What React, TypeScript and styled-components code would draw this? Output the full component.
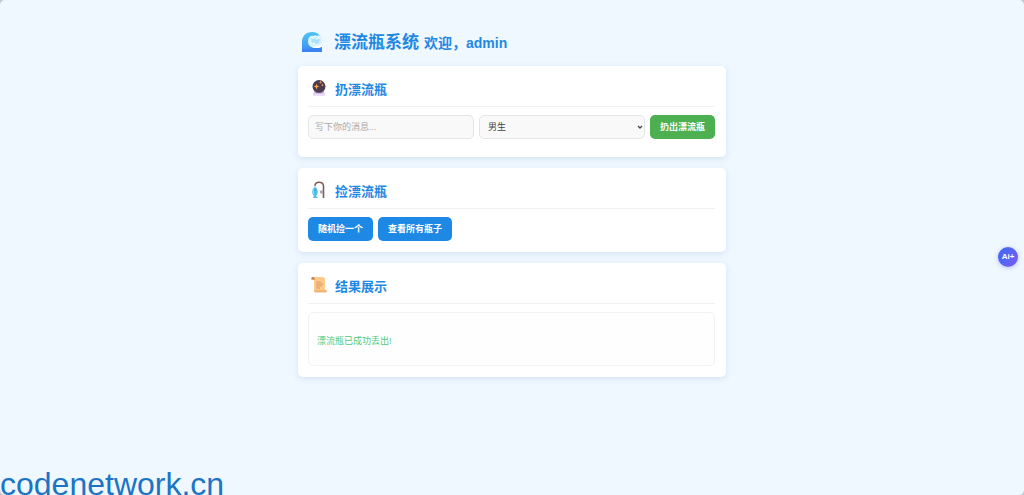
import React from 'react';
import styled, { createGlobalStyle } from 'styled-components';

const GlobalStyle = createGlobalStyle`
  *, *::before, *::after { box-sizing: border-box; }
  body {
    margin: 0;
    background: #c3c9ce;
    font-family: "Liberation Sans", "Noto Sans CJK SC", sans-serif;
    font-size: 9px;
    line-height: 14px;
    color: #333;
  }
  button, input, select { font: inherit; }
`;

const Page = styled.div`
  position: relative;
  min-height: 100vh;
  padding: 30px 16px 48px;
  border-radius: 5px;
  background: #eff7ff;
`;

const Container = styled.main`
  display: flex;
  flex-direction: column;
  gap: 11px;
  width: 100%;
  max-width: 428px;
  margin: 0 auto;
`;

const Header = styled.header`
  display: flex;
  align-items: center;
  gap: 11px;
  height: 25px;
  padding-left: 3px;
  color: #1e88e5;
`;

const Titles = styled.div`
  display: flex;
  align-items: baseline;
  gap: 5px;
`;

const Title = styled.h1`
  margin: 0;
  font-size: 17px;
  line-height: 26px;
`;

const Welcome = styled.span`
  font-size: 14px;
  font-weight: 700;
  line-height: 24px;
`;

const Card = styled.section<{ $bottom?: number }>`
  padding: 11px 11px ${({ $bottom }) => $bottom ?? 11}px 10px;
  border-radius: 5px;
  background: #fff;
  box-shadow: 0 2px 6px rgba(60, 110, 160, 0.13);
`;

const CardHead = styled.div`
  display: flex;
  align-items: flex-start;
  gap: 7px;
  height: 30px;
  padding: 2px 0 0 2px;
  margin-bottom: 8px;
  border-bottom: 1px solid #f0f1f3;
`;

const CardTitle = styled.h2`
  margin: 0;
  color: #1e88e5;
  font-size: 13px;
  line-height: 22px;
`;

const Row = styled.div`
  display: flex;
  align-items: center;
  gap: 5px;
`;

const FormRow = styled.form`
  display: grid;
  grid-template-columns: minmax(0, 1fr) minmax(0, 1fr) auto;
  align-items: center;
  gap: 5px;
`;

const TextInput = styled.input`
  width: 100%;
  height: 24px;
  padding: 0 6px;
  border: 1px solid #e4e5e7;
  border-radius: 5px;
  background: #f9f9f9;
  color: #444;
  &::placeholder { color: #aaa; opacity: 1; }
`;

const SelectWrap = styled.div`
  display: grid;
  align-items: center;
  svg {
    grid-area: 1 / 1;
    justify-self: end;
    margin-right: 2px;
    pointer-events: none;
  }
`;

const Select = styled.select`
  grid-area: 1 / 1;
  width: 100%;
  height: 24px;
  padding: 0 8px;
  border: 1px solid #e4e5e7;
  border-radius: 5px;
  background: #f9f9f9;
  color: #444;
  appearance: none;
`;

const Button = styled.button<{ $color: string }>`
  flex: none;
  height: 24px;
  padding: 0 10px;
  border: 0;
  border-radius: 5px;
  background: ${({ $color }) => $color};
  color: #fff;
  font-weight: 700;
  cursor: pointer;
`;

const Result = styled.div`
  padding: 21px 8px 17px;
  border: 1px solid #f1f2f4;
  border-radius: 5px;
  background: #fefefe;
`;

const Success = styled.p`
  margin: 0;
  color: #4fcb7c;
`;

const AiButton = styled.button`
  position: absolute;
  top: 247px;
  right: 6px;
  width: 20px;
  height: 20px;
  padding: 0;
  border: 0;
  border-radius: 50%;
  background: linear-gradient(120deg, #3b6cf0, #7a5af8);
  box-shadow: 0 1px 4px rgba(80, 90, 220, 0.35);
  color: #fff;
  font-size: 8px;
  font-weight: 700;
  line-height: 20px;
`;

const Watermark = styled.div`
  position: absolute;
  left: 0;
  bottom: 0;
  color: #1c74c4;
  font-size: 32px;
  line-height: 22px;
`;

const Clip = styled.div`
  overflow: hidden;
`;

const WaveIcon = () => (
  <svg width="22" height="22" viewBox="0 0 22 22" aria-hidden="true">
    <defs>
      <linearGradient id="wave" x1="0" y1="0" x2="0" y2="1">
        <stop offset="0" stopColor="#4ec3f5" />
        <stop offset="0.6" stopColor="#43a5f5" />
        <stop offset="1" stopColor="#3c82f4" />
      </linearGradient>
    </defs>
    <path d="M1 20V10C1 4 5 0 11 0c4 0 6 1 8 4h1v4l1 12z" fill="url(#wave)" />
    <path d="M7 9c0-4 3-6 6-5l1-1 2 1 2-1 1 1 2 0-1 2 1 2-1 2 1 1v4c-2 2-5 2-8 1-4-1-6-3-6-7z" fill="#d9f3ff" />
    <path d="M10 6l2 1 2-1 1 2 3-1 2 1-2 1v2l-3 1-2-2-2 1z" fill="#a9e0fb" />
    <path d="M8 9c0 5 5 7 9 5l4-2v3c-7 3-13 0-13-6z" fill="#fff" />
    <path d="M1 17c5 2 8-1 13-1 3 0 5 0 7-1v5H1z" fill="#3b83f3" />
  </svg>
);

const CrystalIcon = () => (
  <svg width="18" height="18" viewBox="0 0 18 18" aria-hidden="true">
    <path d="M4 12h10l1 5H3z" fill="#d3c2e8" />
    <path d="M3 15h12v2H3z" fill="#e9dff5" />
    <circle cx="9" cy="7.500" r="6.500" fill="#4a3b50" />
    <path d="M4 11.500c2 2 8 2 10 0-1 3-9 3-10 0z" fill="#73618d" />
    <path d="M6.500 4.500l.8 2.200 2.200.8-2.200.8-.8 2.200-.8-2.200L3.500 7.500l2.200-.8z" fill="#f9a251" />
    <path d="M10.500 1.500l.5 1.300 1.300.5-1.300.5-.5 1.300-.5-1.300-1.300-.5 1.300-.5zM12.500 4.500l.5 1 1 .5-1 .5-.5 1-.5-1-1-.5 1-.5z" fill="#e99258" />
  </svg>
);

const FishingIcon = () => (
  <svg width="18" height="18" viewBox="0 0 18 18" aria-hidden="true">
    <path d="M5 5c0-5 8-5 8.500 0v12" fill="none" stroke="#805b58" strokeWidth="1.600" />
    <path d="M5 4v4" stroke="#a7b4bf" strokeWidth=".7" />
    <circle cx="11.500" cy="11" r="1.700" fill="#b0a1b4" />
    <path d="M5 6c3 2 4 6 1 9l2 2H3l1-2C1 12 2 8 5 6z" fill="#4dbdea" />
    <path d="M4 8c-2 2-2 4 0 6z" fill="#90dcf6" />
    <circle cx="5" cy="9" r=".6" fill="#286d9c" />
  </svg>
);

const ScrollIcon = () => (
  <svg width="18" height="18" viewBox="0 0 18 18" aria-hidden="true">
    <path d="M3 1h10q2 0 2 2v12H4V4H3Q1 4 1 2.500T3 1z" fill="#ffcb8d" />
    <path d="M1 2q2-2 4 0v2H3Q1 4 1 2z" fill="#e7a063" />
    <circle cx="3" cy="2.200" r=".9" fill="#ba704f" />
    <path d="M6 14h10q1 0 1 1.200T15 16.500H6q-2 0-2-1.500z" fill="#f2b475" />
    <path d="M6 6h5M6 8h7M6 10h6M6 12h4" stroke="#dc965f" strokeWidth="1" />
  </svg>
);

export default function App() {
  return (
    <Clip>
      <GlobalStyle />
      <Page>
        <Container>
          <Header>
            <WaveIcon />
            <Titles>
              <Title>漂流瓶系统</Title>
              <Welcome>欢迎，admin</Welcome>
            </Titles>
          </Header>

          <Card $bottom={18}>
            <CardHead>
              <CrystalIcon />
              <CardTitle>扔漂流瓶</CardTitle>
            </CardHead>
            <FormRow onSubmit={(e) => e.preventDefault()}>
              <TextInput type="text" placeholder="写下你的消息..." aria-label="写下你的消息" />
              <SelectWrap>
                <Select aria-label="性别" defaultValue="male">
                  <option value="male">男生</option>
                  <option value="female">女生</option>
                </Select>
                <svg width="6" height="5" viewBox="0 0 6 5" aria-hidden="true">
                  <path d="M1 1l2 2 2-2" fill="none" stroke="#444" strokeWidth="1.300" />
                </svg>
              </SelectWrap>
              <Button type="submit" $color="#4caf50">扔出漂流瓶</Button>
            </FormRow>
          </Card>

          <Card>
            <CardHead>
              <FishingIcon />
              <CardTitle>捡漂流瓶</CardTitle>
            </CardHead>
            <Row>
              <Button type="button" $color="#1e88e5">随机捡一个</Button>
              <Button type="button" $color="#1e88e5">查看所有瓶子</Button>
            </Row>
          </Card>

          <Card>
            <CardHead>
              <ScrollIcon />
              <CardTitle>结果展示</CardTitle>
            </CardHead>
            <Result>
              <Success>漂流瓶已成功丢出!</Success>
            </Result>
          </Card>
        </Container>
        <AiButton type="button">Ai+</AiButton>
        <Watermark>codenetwork.cn</Watermark>
      </Page>
    </Clip>
  );
}
